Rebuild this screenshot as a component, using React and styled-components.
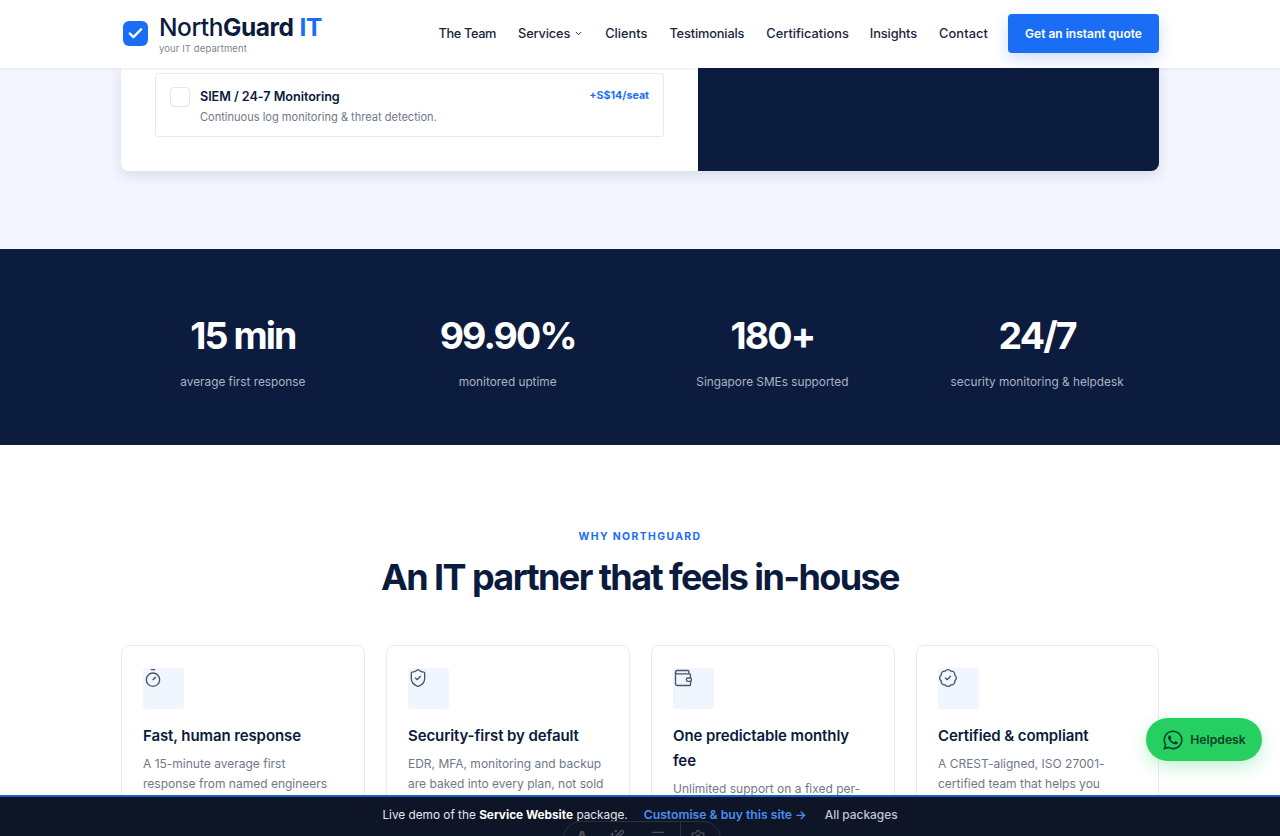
import React from "react";
import styled, { createGlobalStyle } from "styled-components";
import { Timer, ShieldCheck, Wallet, BadgeCheck, ChevronDown, Check, Wand2, Menu, Settings } from "lucide-react";
import { FaWhatsapp } from "react-icons/fa";

const Global = createGlobalStyle`
  html, body { margin: 0; padding: 0; height: 836px; overflow: hidden; background: #fff; }
  * { box-sizing: border-box; }
  body { font-family: "Inter", "Liberation Sans", sans-serif; color: #0b1b3d; }
`;
const Page = styled.div`position: relative; width: 1280px; height: 836px; overflow: hidden;`;
const Main = styled.main`height: 795px; overflow: hidden;`;
const Header = styled.header`
  position: relative; z-index: 3; height: 68px; background: #fff; padding: 0 121px 2px 123px;
  display: flex; align-items: center; justify-content: space-between;
  box-shadow: 0 1px 3px rgba(11,27,61,.09);
`;
const Brand = styled.div`display: flex; align-items: center; gap: 11px;`;
const LogoMark = styled.div`
  width: 25px; height: 25px; border-radius: 6px; background: #1a6ef5; color: #fff;
  display: flex; align-items: center; justify-content: center; margin-top: 1px;
`;
const BrandText = styled.div`display: flex; flex-direction: column; margin-top: 3px;`;
const Wordmark = styled.div`font-size: 24.5px; line-height: 27px; letter-spacing: -.45px; color: #0b1b3d; font-weight: 500;
  b { font-weight: 700; } span { font-weight: 700; color: #1a6ef5; }`;
const Tagline = styled.div`font-size: 9.5px; line-height: 13px; margin-top: 1px; color: #7b8494; letter-spacing: .1px;`;
const Nav = styled.nav`display: flex; align-items: center;`;
const NavLink = styled.a`
  font-size: 12.8px; font-weight: 500; color: #1a2540; margin-right: ${p => p.$gap}px; letter-spacing: ${p => p.$track}px;
  display: flex; align-items: center; gap: 4px; white-space: nowrap;
`;
const Quote = styled.a`
  width: 151px; height: 39px; border-radius: 4px; background: #1a6ef5; color: #fff; font-size: 12px; font-weight: 600;
  display: flex; align-items: center; justify-content: center; box-shadow: 0 6px 16px rgba(26,110,245,.22); margin-left: 7px;
`;
const Pricing = styled.section`height: 181px; background: #f3f6fe; padding: 0 121px;`;
const PriceCard = styled.div`
  height: 103px; display: grid; grid-template-columns: 577px 461px; border-radius: 0 0 8px 8px; overflow: hidden;
  box-shadow: 0 4px 14px rgba(11,27,61,.12);
`;
const PriceLeft = styled.div`background: #fff; padding: 5px 34px 34px;`;
const PriceRight = styled.div`background: #0c1c3e;`;
const Option = styled.div`
  height: 64px; border: 1px solid #e6e9ef; border-radius: 3px; padding: 13px 14px 0; display: grid; grid-template-columns: 20px 1fr auto; column-gap: 10px;
`;
const CheckBox = styled.div`width: 20px; height: 20px; border: 1px solid #e3e6ec; border-radius: 4px; background: #fff;`;
const OptionTitle = styled.div`font-size: 12.65px; line-height: 19px; font-weight: 600; color: #0b1b3d; letter-spacing: -.05px;`;
const OptionDesc = styled.div`font-size: 11.05px; line-height: 16px; margin-top: 3px; color: #6f7888;`;
const OptionPrice = styled.div`font-size: 10.7px; line-height: 18px; font-weight: 700; color: #1a6ef5;`;
const Stats = styled.section`height: 196px; background: #0c1c3e; padding: 0 121px; display: grid; grid-template-columns: repeat(4, 1fr); column-gap: 21px;`;
const Stat = styled.div`display: flex; flex-direction: column; align-items: center; padding-top: 64px;`;
const StatValue = styled.div`font-size: 37.5px; line-height: 46px; font-weight: 700; color: #fff; letter-spacing: -1.9px;`;
const StatLabel = styled.div`font-size: 11.8px; line-height: 18px; margin-top: 14px; color: #aab3c4;`;
const Why = styled.section`padding: 85px 121px 0; background: #fff;`;
const Eyebrow = styled.div`font-size: 10.4px; line-height: 14px; font-weight: 700; letter-spacing: 1.4px; text-align: center; color: #1a6ef5;`;
const Heading = styled.h2`margin: 10px 0 0; font-size: 36px; line-height: 46px; font-weight: 700; letter-spacing: -1.6px; text-align: center; color: #0b1b3d;`;
const Cards = styled.div`margin-top: 45px; display: grid; grid-template-columns: repeat(3, 244px) 1fr; column-gap: 21px;`;
const Card = styled.article`height: 260px; border: 1px solid #e8ebf0; border-radius: 8px; padding: 24px 21px;`;
const IconBox = styled.div`width: 41px; height: 41px; border-radius: 3px; background: #f0f5fe; color: #4b5563; margin-bottom: 14px;
  svg { display: block; margin-top: -2px; }`;
const CardTitle = styled.h3`margin: 0; font-size: 15px; line-height: 25px; font-weight: 600; color: #0b1b3d; letter-spacing: -.1px;`;
const CardText = styled.p`margin: 6px 0 0; max-width: 198px; font-size: 12px; line-height: 20px; color: #6f7888;`;
const Helpdesk = styled.a`
  position: absolute; z-index: 5; left: 1146px; top: 718px; width: 116px; height: 43px; border-radius: 22px; background: #25d060;
  display: flex; align-items: center; justify-content: center; gap: 6px; font-size: 12.2px; font-weight: 600; color: #0e3d2a;
  box-shadow: 0 6px 18px rgba(37,208,96,.28);
`;
const DemoBar = styled.div`
  position: absolute; z-index: 6; left: 0; right: 0; bottom: 0; height: 41px; background: #0d1526; border-top: 2px solid #1a5fc9;
  display: flex; align-items: center; justify-content: center; padding-bottom: 4px; color: #e4e7ee; overflow: hidden;
`;
const DemoText = styled.span`font-size: 11.8px; b { font-weight: 700; color: #fff; }`;
const BuyLink = styled.a`margin-left: 16px; font-size: 12.2px; color: #4f8df0; font-weight: 600;`;
const AllLink = styled.a`margin-left: 18px; font-size: 11.9px; color: #c2c7d1; font-weight: 500;`;
const ToolPill = styled.div`
  position: absolute; left: 563px; top: 24px; width: 158px; height: 40px; border-radius: 18px; border: 1px solid #2a3040; background: #0e1524;
  display: flex; align-items: flex-start; padding: 7px 0 0 10px; color: #4a4f5c;
`;
const ToolSlot = styled.span`
  display: flex; width: 16px; height: 16px; justify-content: center; margin-left: ${p => p.$gap}px;
  font-size: 16px; line-height: 16px; font-weight: 700;
`;
const Divider = styled.span`width: 1px; height: 20px; margin: -7px 0 0 14px; background: #2a3040;`;

const navItems = [
  ["The Team", 22, -0.38], ["Services", 22, -0.15, true], ["Clients", 22, 0], ["Testimonials", 22, -0.15],
  ["Certifications", 21, 0], ["Insights", 22, -0.1], ["Contact", 13, 0.1],
];
const stats = [["15 min", "average first response"], ["99.90%", "monitored uptime"], ["180+", "Singapore SMEs supported"], ["24/7", "security monitoring & helpdesk"]];
const cards = [
  [Timer, "Fast, human response", "A 15-minute average first response from named engineers"],
  [ShieldCheck, "Security-first by default", "EDR, MFA, monitoring and backup are baked into every plan, not sold"],
  [Wallet, "One predictable monthly fee", "Unlimited support on a fixed per-"],
  [BadgeCheck, "Certified & compliant", "A CREST-aligned, ISO 27001-certified team that helps you"],
];

export default function App() {
  return (
    <Page>
      <Global />
      <Header>
        <Brand>
          <LogoMark><Check size={17} strokeWidth={3.4} /></LogoMark>
          <BrandText>
            <Wordmark>North<b>Guard</b> <span>IT</span></Wordmark>
            <Tagline>your IT department</Tagline>
          </BrandText>
        </Brand>
        <Nav>
          {navItems.map(([label, gap, track, caret]) => (
            <NavLink key={label} $gap={gap} $track={track}>{label}{caret && <ChevronDown size={9} strokeWidth={2.5} />}</NavLink>
          ))}
          <Quote>Get an instant quote</Quote>
        </Nav>
      </Header>
      <Main>
        <Pricing>
          <PriceCard>
            <PriceLeft>
              <Option>
                <CheckBox />
                <div>
                  <OptionTitle>SIEM / 24-7 Monitoring</OptionTitle>
                  <OptionDesc>Continuous log monitoring &amp; threat detection.</OptionDesc>
                </div>
                <OptionPrice>+S$14/seat</OptionPrice>
              </Option>
            </PriceLeft>
            <PriceRight />
          </PriceCard>
        </Pricing>
        <Stats>
          {stats.map(([v, l]) => (
            <Stat key={v}><StatValue>{v}</StatValue><StatLabel>{l}</StatLabel></Stat>
          ))}
        </Stats>
        <Why>
          <Eyebrow>WHY NORTHGUARD</Eyebrow>
          <Heading>An IT partner that feels in-house</Heading>
          <Cards>
            {cards.map(([Icon, title, text]) => (
              <Card key={title}>
                <IconBox><Icon size={20} strokeWidth={1.6} /></IconBox>
                <CardTitle>{title}</CardTitle>
                <CardText>{text}</CardText>
              </Card>
            ))}
          </Cards>
        </Why>
      </Main>
      <Helpdesk><FaWhatsapp size={22} />Helpdesk</Helpdesk>
      <DemoBar>
        <DemoText>Live demo of the <b>Service Website</b> package.</DemoText>
        <BuyLink>Customise &amp; buy this site →</BuyLink>
        <AllLink>All packages</AllLink>
        <ToolPill>
          <ToolSlot $gap={0}>A</ToolSlot>
          <ToolSlot $gap={19}><Wand2 size={16} /></ToolSlot>
          <ToolSlot $gap={25}><Menu size={16} /></ToolSlot>
          <Divider />
          <ToolSlot $gap={9}><Settings size={16} /></ToolSlot>
        </ToolPill>
      </DemoBar>
    </Page>
  );
}
